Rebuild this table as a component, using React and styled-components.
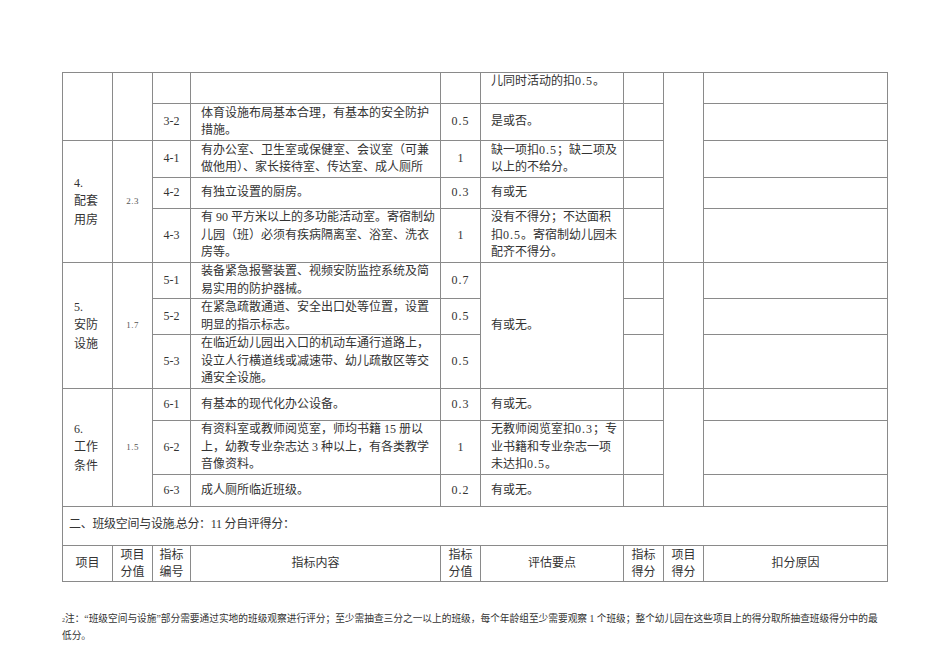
import React from 'react';
import styled, { createGlobalStyle } from 'styled-components';

const GlobalStyle = createGlobalStyle`
  html, body {
    margin: 0;
    padding: 0;
    background: #ffffff;
  }
  body {
    font-family: "Liberation Serif", "Noto Sans CJK SC", serif;
    color: #333333;
  }
`;

const Page = styled.div`
  width: 950px;
  height: 672px;
  box-sizing: border-box;
  padding: 72px 0 0 62px;
  overflow: hidden;
`;

const Sheet = styled.table`
  border-collapse: collapse;
  table-layout: fixed;
  width: 826px;
  font-size: 12px;
  line-height: 17.5px;
`;

const Row = styled.tr`
  height: ${props => props.$h}px;
`;

const Cell = styled.td`
  border: 1px solid #8a8a8a;
  padding: ${props => (props.$align === 'left' ? '0 6px 0 10px' : '0')};
  text-align: ${props => props.$align || 'center'};
  vertical-align: ${props => props.$top ? 'top' : 'middle'};
  white-space: nowrap;
  overflow: hidden;
`;

const ItemName = styled.div`
  text-align: left;
  padding-left: 11px;
  line-height: 18.5px;
`;

const SmallValue = styled.span`
  font-size: 9px;
  color: #555555;
  letter-spacing: 0.5px;
`;

const Score = styled.span`
  letter-spacing: 1px;
`;

const SectionCell = styled.td`
  border: 1px solid #8a8a8a;
  padding: 0 6px;
  text-align: left;
  font-size: 12px;
  letter-spacing: -0.3px;
`;

const Head = styled.td`
  border: 1px solid #8a8a8a;
  text-align: center;
  line-height: 17px;
  padding: 0;
`;

const Footnote = styled.p`
  margin: 29px 0 0 0;
  width: 830px;
  font-size: 9.7px;
  line-height: 15px;
  color: #333333;
  white-space: nowrap;
`;

const NoteMark = styled.span`
  font-size: 6px;
`;

const App = () => (
  <>
    <GlobalStyle />
    <Page>
      <Sheet>
        <colgroup>
          <col style={{ width: 50 }} />
          <col style={{ width: 40 }} />
          <col style={{ width: 38 }} />
          <col style={{ width: 250 }} />
          <col style={{ width: 40 }} />
          <col style={{ width: 143 }} />
          <col style={{ width: 40 }} />
          <col style={{ width: 40 }} />
          <col style={{ width: 184 }} />
        </colgroup>
        <tbody>
          <Row $h={31}>
            <Cell rowSpan={2} />
            <Cell rowSpan={2} />
            <Cell />
            <Cell />
            <Cell />
            <Cell $align="left" $top>儿同时活动的扣<Score>0.5</Score>。</Cell>
            <Cell />
            <Cell rowSpan={5} />
            <Cell />
          </Row>
          <Row $h={37}>
            <Cell>3-2</Cell>
            <Cell $align="left">体育设施布局基本合理，有基本的安全防护<br />措施。</Cell>
            <Cell><Score>0.5</Score></Cell>
            <Cell $align="left">是或否。</Cell>
            <Cell />
            <Cell />
          </Row>

          <Row $h={37}>
            <Cell rowSpan={3}><ItemName>4.<br />配套<br />用房</ItemName></Cell>
            <Cell rowSpan={3}><SmallValue>2.3</SmallValue></Cell>
            <Cell>4-1</Cell>
            <Cell $align="left">有办公室、卫生室或保健室、会议室（可兼<br />做他用）、家长接待室、传达室、成人厕所</Cell>
            <Cell>1</Cell>
            <Cell $align="left">缺一项扣<Score>0.5</Score>；缺二项及<br />以上的不给分。</Cell>
            <Cell />
            <Cell />
          </Row>
          <Row $h={31}>
            <Cell>4-2</Cell>
            <Cell $align="left">有独立设置的厨房。</Cell>
            <Cell><Score>0.3</Score></Cell>
            <Cell $align="left">有或无</Cell>
            <Cell />
            <Cell />
          </Row>
          <Row $h={54}>
            <Cell>4-3</Cell>
            <Cell $align="left">有 90 平方米以上的多功能活动室。寄宿制幼<br />儿园（班）必须有疾病隔离室、浴室、洗衣<br />房等。</Cell>
            <Cell>1</Cell>
            <Cell $align="left">没有不得分；不达面积<br />扣<Score>0.5</Score>。寄宿制幼儿园未<br />配齐不得分。</Cell>
            <Cell />
            <Cell />
          </Row>

          <Row $h={36}>
            <Cell rowSpan={3}><ItemName>5.<br />安防<br />设施</ItemName></Cell>
            <Cell rowSpan={3}><SmallValue>1.7</SmallValue></Cell>
            <Cell>5-1</Cell>
            <Cell $align="left">装备紧急报警装置、视频安防监控系统及简<br />易实用的防护器械。</Cell>
            <Cell><Score>0.7</Score></Cell>
            <Cell $align="left" rowSpan={3}>有或无。</Cell>
            <Cell />
            <Cell rowSpan={3} />
            <Cell />
          </Row>
          <Row $h={35}>
            <Cell>5-2</Cell>
            <Cell $align="left">在紧急疏散通道、安全出口处等位置，设置<br />明显的指示标志。</Cell>
            <Cell><Score>0.5</Score></Cell>
            <Cell />
            <Cell />
          </Row>
          <Row $h={54}>
            <Cell>5-3</Cell>
            <Cell $align="left">在临近幼儿园出入口的机动车通行道路上，<br />设立人行横道线或减速带、幼儿疏散区等交<br />通安全设施。</Cell>
            <Cell><Score>0.5</Score></Cell>
            <Cell />
            <Cell />
          </Row>

          <Row $h={32}>
            <Cell rowSpan={3}><ItemName>6.<br />工作<br />条件</ItemName></Cell>
            <Cell rowSpan={3}><SmallValue>1.5</SmallValue></Cell>
            <Cell>6-1</Cell>
            <Cell $align="left">有基本的现代化办公设备。</Cell>
            <Cell><Score>0.3</Score></Cell>
            <Cell $align="left">有或无。</Cell>
            <Cell />
            <Cell rowSpan={3} />
            <Cell />
          </Row>
          <Row $h={54}>
            <Cell>6-2</Cell>
            <Cell $align="left">有资料室或教师阅览室，师均书籍 15 册以<br />上，幼教专业杂志达 3 种以上，有各类教学<br />音像资料。</Cell>
            <Cell>1</Cell>
            <Cell $align="left">无教师阅览室扣<Score>0.3</Score>；专<br />业书籍和专业杂志一项<br />未达扣<Score>0.5</Score>。</Cell>
            <Cell />
            <Cell />
          </Row>
          <Row $h={32}>
            <Cell>6-3</Cell>
            <Cell $align="left">成人厕所临近班级。</Cell>
            <Cell><Score>0.2</Score></Cell>
            <Cell $align="left">有或无。</Cell>
            <Cell />
            <Cell />
          </Row>

          <Row $h={39}>
            <SectionCell colSpan={9}>二、班级空间与设施<NoteMark>:</NoteMark>总分：11 分自评得分：</SectionCell>
          </Row>
          <Row $h={36}>
            <Head>项目</Head>
            <Head>项目<br />分值</Head>
            <Head>指标<br />编号</Head>
            <Head>指标内容</Head>
            <Head>指标<br />分值</Head>
            <Head>评估要点</Head>
            <Head>指标<br />得分</Head>
            <Head>项目<br />得分</Head>
            <Head>扣分原因</Head>
          </Row>
        </tbody>
      </Sheet>
      <Footnote>
        <NoteMark>2</NoteMark>注：“班级空间与设施”部分需要通过实地的班级观察进行评分；至少需抽查三分之一以上的班级，每个年龄组至少需要观察 1 个班级；整个幼儿园在这些项目上的得分取所抽查班级得分中的最<br />
        低分。
      </Footnote>
    </Page>
  </>
);

export default App;
